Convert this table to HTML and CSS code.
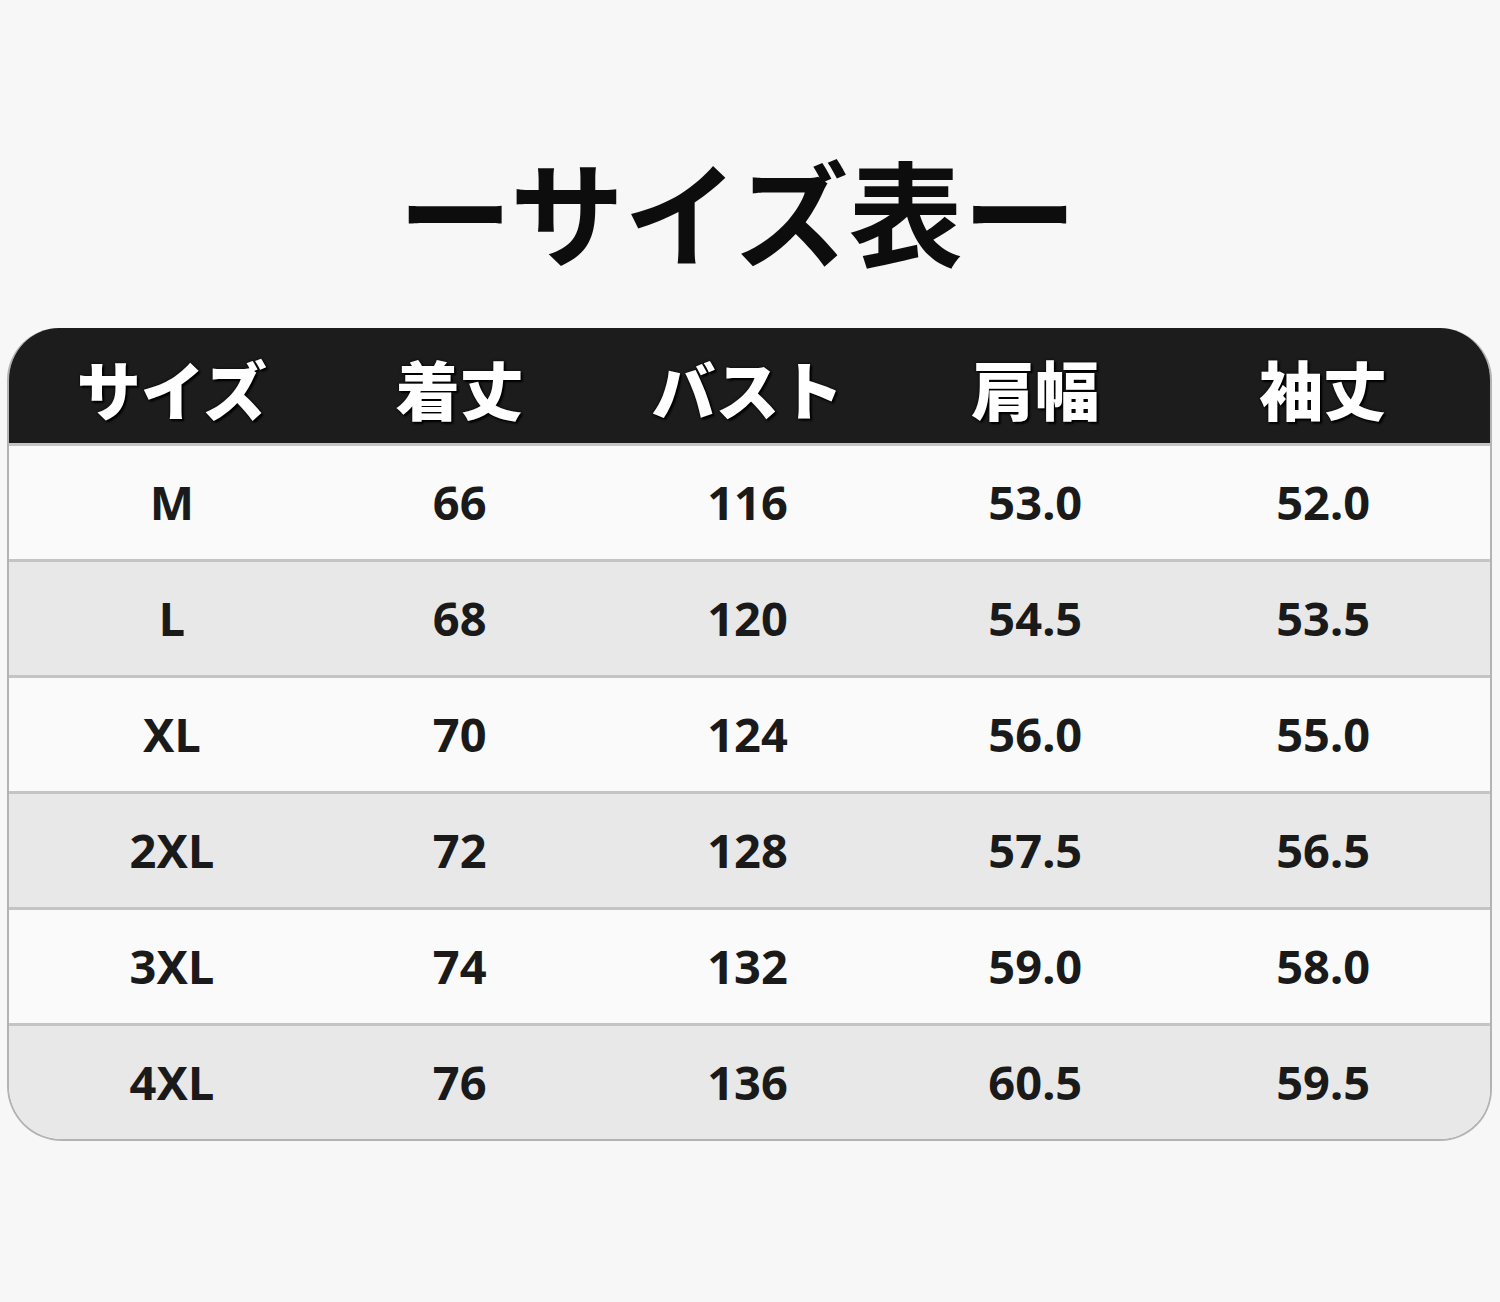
FILE: index.html
```html
<!DOCTYPE html>
<html lang="ja">
<head>
<meta charset="utf-8">
<title>サイズ表</title>
<link rel="stylesheet" href="styles.css">
</head>
<body>
<main class="page">
  <h1 class="title">ーサイズ表ー</h1>
  <section class="chart">
    <div class="row head">
      <div class="cell">サイズ</div>
      <div class="cell">着丈</div>
      <div class="cell">バスト</div>
      <div class="cell">肩幅</div>
      <div class="cell">袖丈</div>
    </div>
    <div class="row light">
      <div class="cell">M</div><div class="cell">66</div><div class="cell">116</div><div class="cell">53.0</div><div class="cell">52.0</div>
    </div>
    <div class="row gray">
      <div class="cell">L</div><div class="cell">68</div><div class="cell">120</div><div class="cell">54.5</div><div class="cell">53.5</div>
    </div>
    <div class="row light">
      <div class="cell">XL</div><div class="cell">70</div><div class="cell">124</div><div class="cell">56.0</div><div class="cell">55.0</div>
    </div>
    <div class="row gray">
      <div class="cell">2XL</div><div class="cell">72</div><div class="cell">128</div><div class="cell">57.5</div><div class="cell">56.5</div>
    </div>
    <div class="row light">
      <div class="cell">3XL</div><div class="cell">74</div><div class="cell">132</div><div class="cell">59.0</div><div class="cell">58.0</div>
    </div>
    <div class="row gray last">
      <div class="cell">4XL</div><div class="cell">76</div><div class="cell">136</div><div class="cell">60.5</div><div class="cell">59.5</div>
    </div>
  </section>
</main>
</body>
</html>
```

FILE: styles.css
```css
html, body {
  margin: 0;
  padding: 0;
  background: #f7f7f7;
}

.page {
  width: 1500px;
  height: 1302px;
  box-sizing: border-box;
  padding: 134px 8px 0 7px;
  display: flex;
  flex-direction: column;
  align-items: stretch;
}

.title {
  margin: 0;
  height: 156px;
  line-height: 150px;
  text-align: center;
  font-family: "Noto Sans CJK JP", "Noto Sans", sans-serif;
  font-weight: 700;
  font-size: 114px;
  color: #0d0d0d;
  padding-right: 24px;
}

.chart {
  margin-top: 38px;
  border: 2px solid #b3b3b3;
  border-top: none;
  border-radius: 52px 52px 52px 55px;
  overflow: hidden;
  background: #fafafa;
}

.row {
  display: grid;
  grid-template-columns: repeat(5, 1fr);
  padding: 0 23px 0 19px;
  height: 116px;
  box-sizing: border-box;
  border-top: 3px solid #c4c4c4;
  align-items: center;
}

.row.head {
  height: 115px;
  border-top: none;
  background: #1c1c1c;
}

.row.light {
  background: #fafafa;
}

.row.gray {
  background: #e8e8e8;
}

.cell {
  text-align: center;
  font-family: "Noto Sans", "Noto Sans CJK JP", sans-serif;
  font-weight: 700;
  font-size: 47px;
  color: #1a1a1a;
  line-height: 1;
}

.head .cell {
  font-family: "Noto Sans CJK JP", sans-serif;
  font-weight: 900;
  font-size: 64px;
  color: #ffffff;
  text-shadow: 0 0 3px #000, 2px 2px 2px #000;
  padding-top: 2px;
}
```
